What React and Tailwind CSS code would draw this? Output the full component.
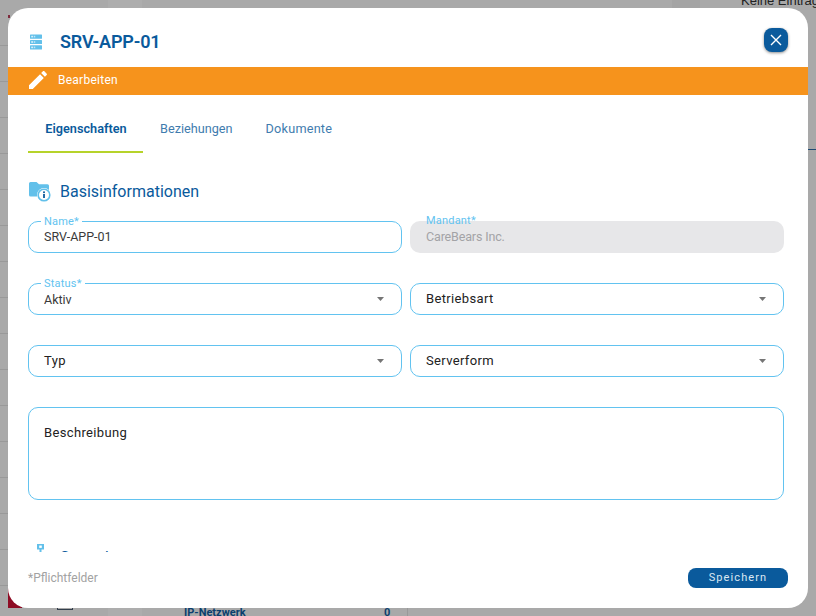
import React from 'react';

const roboto = 'font-["Roboto",sans-serif]';
const rowLines = [45, 81, 117, 153, 189, 225, 261, 297, 333, 369, 405, 441, 477, 513, 549, 585];

function Backdrop() {
  return (
    <div className="absolute inset-0 overflow-hidden bg-[#a9a9a9]" aria-hidden>
      {rowLines.map((y) => (
        <div key={y} className="absolute left-0 w-2 h-px bg-[#999999]" style={{ top: y }} />
      ))}
      <div className="absolute top-0 left-[108px] w-[34px] h-2 bg-[#adadad]" />
      <div className="absolute top-0 left-[672px] w-[28px] h-2 bg-[#a4a4a4]" />
      <div className="absolute bottom-0 left-[108px] w-[34px] h-2 bg-[#adadad]" />
      <div className="absolute top-[-7px] left-[741px] text-[13px] leading-[15px] text-[#222222] whitespace-nowrap font-['Liberation_Sans',sans-serif]">Keine Einträge</div>
      <div className="absolute bottom-[-3px] left-[184px] text-[11px] leading-[13px] font-bold text-[#0b3f6e] font-['Roboto',sans-serif]">IP-Netzwerk</div>
      <div className="absolute bottom-[-3px] left-[384px] text-[11px] leading-[13px] font-bold text-[#0b3f6e] font-['Roboto',sans-serif]">0</div>
      <div className="absolute bottom-0 left-[407px] w-px h-2 bg-[#999999]" />
      <div className="absolute bottom-[6px] left-[57px] w-4 h-[4px] border border-[#333f4c]" />
      <div className="absolute top-[149px] right-0 w-2 h-px bg-[#1f4a73]" />
      <div className="absolute top-[588px] left-2 w-[14px] h-5 bg-[#8e0c24]" />
      <div className="absolute top-[15px] left-2 w-[2px] h-[3px] bg-[#7d2a3c]" />
    </div>
  );
}

function ServerIcon() {
  return (
    <svg width="12" height="16" viewBox="0 0 12 16">
      <g fill="#62c0ea">
        <rect x="0" y="0.5" width="12" height="4.2" rx="0.5" />
        <rect x="0" y="5.9" width="12" height="4.2" rx="0.5" />
        <rect x="0" y="11.3" width="12" height="4.2" rx="0.5" />
      </g>
      <g fill="#ffffff" fillOpacity="0.75">
        <rect x="1.2" y="1.8" width="2" height="1.6" />
        <rect x="4.2" y="1.8" width="1" height="1.6" />
        <rect x="1.2" y="7.2" width="2" height="1.6" />
        <rect x="4.2" y="7.2" width="1" height="1.6" />
        <rect x="1.2" y="12.6" width="2" height="1.6" />
        <rect x="4.2" y="12.6" width="1" height="1.6" />
      </g>
    </svg>
  );
}

function PencilIcon() {
  return (
    <svg width="24" height="24" viewBox="0 0 24 24" fill="#ffffff">
      <path d="M3 17.25V21h3.75L17.81 9.94l-3.75-3.75L3 17.25zM20.71 7.04c.39-.39.39-1.02 0-1.41l-2.34-2.34c-.39-.39-1.02-.39-1.41 0l-1.83 1.83 3.75 3.75 1.83-1.83z" />
    </svg>
  );
}

function FolderInfoIcon() {
  return (
    <svg width="23" height="20" viewBox="0 0 23 20">
      <path d="M0 1.5A1.5 1.5 0 0 1 1.5 0h6L10 2.2h8.5A1.5 1.5 0 0 1 20 3.7V13a1.5 1.5 0 0 1-1.5 1.5h-17A1.5 1.5 0 0 1 0 13z" fill="#62c0ea" />
      <circle cx="15" cy="13" r="7" fill="#ffffff" />
      <circle cx="15" cy="13" r="5.8" fill="none" stroke="#62c0ea" strokeWidth="1.6" />
      <rect x="14.1" y="12" width="1.8" height="4" fill="#0a5a9c" />
      <rect x="14.1" y="9.4" width="1.8" height="1.7" fill="#0a5a9c" />
    </svg>
  );
}

function PinIcon() {
  return (
    <svg width="7" height="8" viewBox="0 0 7 8">
      <path d="M0 0h7v5.5H4.5V8h-2V5.5H0z" fill="#62c0ea" />
      <rect x="2.2" y="1.5" width="2.6" height="2.4" fill="#ffffff" />
    </svg>
  );
}

function Field({ label, value, disabled, select, placeholder }) {
  return (
    <div className={`relative h-8 rounded-[10px] flex items-center pr-[17px] ${roboto} text-[12.5px] ${disabled ? 'pl-4 bg-[#e7e7e9] text-[#a3a3a6]' : 'pl-[15px] border border-[#62c3f0] bg-white text-[#3a3a3a]'}`}>
      {label && (
        <span className={`absolute top-[-7px] px-[3px] text-[11px] leading-[13px] text-[#62c3f0] tracking-[0.2px] ${disabled ? 'left-[13px]' : 'left-[12px] bg-white'}`}>
          {label}
        </span>
      )}
      <span className={`flex-1 ${placeholder ? 'text-[13px] text-[#222222] tracking-[0.35px]' : ''} ${disabled ? 'tracking-[-0.15px]' : ''} ${label ? (select ? 'pt-[3px]' : 'pt-[1px]') : ''}`}>{value || placeholder}</span>
      {select && (
        <svg width="7" height="4" viewBox="0 0 7 4" className="shrink-0">
          <path d="M0 0h7L3.5 4z" fill="#757575" />
        </svg>
      )}
    </div>
  );
}

export default function App() {
  return (
    <div className="relative w-[816px] h-[616px] overflow-hidden p-2">
      <Backdrop />

      <div role="dialog" aria-modal="true" className="relative w-[800px] h-[600px] bg-white rounded-[20px] overflow-hidden flex flex-col">
        {/* Header */}
        <div className="h-[59px] shrink-0 flex items-center pt-[4px] pl-[22px] pr-5">
          <div className="mt-[4px] flex"><ServerIcon /></div>
          <h1 className={`mt-[4px] ml-[18px] flex-1 ${roboto} text-[18px] font-semibold text-[#0a5a9c] tracking-[-0.15px]`}>SRV-APP-01</h1>
          <button aria-label="Schließen" className="w-6 h-6 rounded-lg bg-[#0a5a9c] flex items-center justify-center shadow-[0_1px_3px_rgba(0,0,0,0.45)]">
            <svg width="12" height="12" viewBox="0 0 12 12" stroke="#ffffff" strokeWidth="1.4" fill="none">
              <path d="M1 1l10 10M11 1L1 11" />
            </svg>
          </button>
        </div>

        {/* Mode bar */}
        <div className="h-7 shrink-0 bg-[#f6931c] flex items-center pl-[18px] pb-[2px]">
          <PencilIcon />
          <span className={`ml-[8px] ${roboto} text-[12px] text-white tracking-[0.25px]`}>Bearbeiten</span>
        </div>

        {/* Scrolling content */}
        <div className="h-[457px] shrink-0 overflow-hidden pl-5 pr-6">
          <div className={`h-[58px] flex items-stretch ${roboto} text-[12.7px] text-[#0a5a9c]`}>
            <div className="w-[115px] pt-3 pl-px border-b-2 border-[#b6d32a] flex items-center justify-center font-semibold">Eigenschaften</div>
            <div className="ml-[17px] pt-[10px] flex items-center text-[#3f7cae]">Beziehungen</div>
            <div className="ml-[33px] pt-[10px] flex items-center text-[#3f7cae] tracking-[0.2px]">Dokumente</div>
          </div>

          <div className="mt-[28px] h-[22px] pl-px flex items-center">
            <FolderInfoIcon />
            <h2 className={`ml-[8px] ${roboto} text-[16px] text-[#0a5a9c]`}>Basisinformationen</h2>
          </div>

          <div className="mt-[18px] grid grid-cols-2 gap-x-2 gap-y-[30px]">
            <Field label="Name*" value="SRV-APP-01" />
            <Field label="Mandant*" value="CareBears Inc." disabled />
            <Field label="Status*" value="Aktiv" select />
            <Field placeholder="Betriebsart" select />
            <Field placeholder="Typ" select />
            <Field placeholder="Serverform" select />
            <div className={`col-span-2 h-[93px] rounded-[10px] border border-[#62c3f0] px-[15px] py-4 ${roboto} text-[13px] leading-[18px] text-[#222222] tracking-[0.35px]`}>
              Beschreibung
            </div>
          </div>

          <div className="mt-[44px] h-[22px] flex items-start">
            <div className="pl-[9px] flex"><PinIcon /></div>
            <h2 className={`ml-[16px] mt-[2px] ${roboto} text-[16px] text-[#0a5a9c]`}>Serverhost</h2>
          </div>
        </div>

        {/* Footer */}
        <div className="flex-1 flex items-center justify-between px-5 pb-[4px]">
          <span className={`${roboto} text-[12px] text-[#a2a2a2]`}>*Pflichtfelder</span>
          <button className={`w-[100px] h-5 rounded-lg bg-[#0a5a9c] text-[11px] ${roboto} text-[#dbe8f3] tracking-[1.1px]`}>Speichern</button>
        </div>
      </div>
    </div>
  );
}
